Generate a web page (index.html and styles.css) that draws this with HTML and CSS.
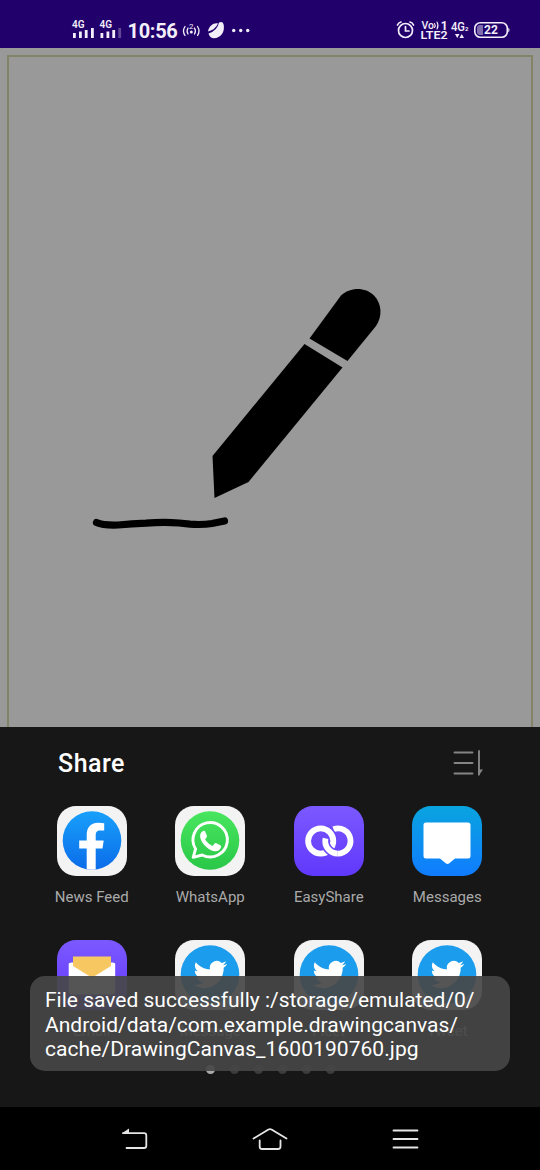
FILE: index.html
```
<!DOCTYPE html>
<html lang="en">
<head>
<meta charset="utf-8">
<title>Drawing Canvas</title>
<link rel="stylesheet" href="styles.css">
</head>
<body>
<svg class="defs" width="0" height="0" aria-hidden="true">
  <defs>
    <linearGradient id="fb" x1="0" y1="0" x2="0" y2="1"><stop offset="0" stop-color="#18a0fb"/><stop offset="1" stop-color="#0b6ce9"/></linearGradient>
    <linearGradient id="wa" x1="0" y1="0" x2="0" y2="1"><stop offset="0" stop-color="#48e65f"/><stop offset="1" stop-color="#2ac748"/></linearGradient>
    <symbol id="tweet" viewBox="0 0 70 70">
      <circle cx="35" cy="34.500" r="29.300" fill="#1c9cec"/>
      <path transform="translate(18.500 17.700) scale(1.400)" fill="#fff" d="M23.953 4.57a10 10 0 01-2.825.775 4.958 4.958 0 002.163-2.723c-.951.555-2.005.959-3.127 1.184a4.92 4.92 0 00-8.384 4.482C7.69 8.095 4.067 6.13 1.64 3.162a4.822 4.822 0 00-.666 2.475c0 1.71.87 3.213 2.188 4.096a4.904 4.904 0 01-2.228-.616v.06a4.923 4.923 0 003.946 4.827 4.996 4.996 0 01-2.212.085 4.936 4.936 0 004.604 3.417 9.867 9.867 0 01-6.102 2.105c-.39 0-.779-.023-1.17-.067a13.995 13.995 0 007.557 2.209c9.053 0 13.998-7.496 13.998-13.985 0-.21 0-.42-.015-.63A9.935 9.935 0 0024 4.59z"/>
    </symbol>
  </defs>
</svg>
<div class="screen">
  <header class="status">
    <svg class="status-left" viewBox="70 16 56 26" fill="#f3effa">
      <text x="72" y="27.600" class="tiny">4G</text>
      <text x="99.500" y="27.600" class="tiny">4G</text>
      <path d="M73 33h2.800v5H73zM79 31.500h2.800v6.500H79zM84.800 30h2.800v8h-2.800zM91 28h2.800v10H91zM100.500 33h2.800v5h-2.800zM106.500 31.500h2.800v6.500h-2.800zM112.300 30h2.800v8h-2.800z"/>
      <path opacity=".3" d="M118.300 28h2.800v10h-2.800z"/>
    </svg>
    <span class="clock">10:56</span>
    <svg class="status-icons" viewBox="180 16 72 28" fill="#f3effa">
      <g fill="none" stroke="#f3effa" stroke-width="1.300" stroke-linecap="round">
        <path d="M185 26.500q-3 4.500 0 9M188 28q-1.800 3 0 6M197.500 26.500q3 4.500 0 9M194.500 28q1.800 3 0 6"/>
      </g>
      <text x="189" y="28.500" font-size="8">2</text><circle cx="191.300" cy="32" r="1.500"/>
      <path d="M208 31.500C209 25.500 214 22.500 218 23.500Q215.500 29.500 208 31.500z"/>
      <path d="M208.500 33.500Q217.500 30.500 219 22.500Q222.500 21 223.500 24C225.500 32 220.500 38.500 213.500 38.200Q209.500 37.500 208.500 33.500z"/>
      <circle cx="233.700" cy="30.500" r="1.700"/><circle cx="240.700" cy="30.500" r="1.700"/><circle cx="247.700" cy="30.500" r="1.700"/>
    </svg>
    <svg class="status-right" viewBox="394 16 120 28" fill="#f3effa">
      <g fill="none" stroke="#f3effa" stroke-width="1.700" stroke-linecap="round">
        <circle cx="405.500" cy="30.500" r="7"/><path d="M405.500 26.500v4.500h3.500M397.500 25q1-2.500 3.500-3M413.500 25q-1-2.500-3.500-3"/>
        <path stroke-width="1.100" d="M434.500 23.500q1.500 2 0 4M437 22q2 3.500 0 7"/>
      </g>
      <text x="421.500" y="29" font-size="10.500" font-weight="500">Vo</text><text x="440.800" y="30" font-size="12" font-weight="700">1</text>
      <text x="420.500" y="39" font-size="11.500" font-weight="600" textLength="27" lengthAdjust="spacingAndGlyphs">LTE2</text>
      <text x="451" y="31" font-size="12.500" font-weight="500" textLength="14" lengthAdjust="spacingAndGlyphs">4G</text><text x="465" y="31" font-size="6" font-weight="700">2</text>
      <path d="M455 34h4.500l-2.250 4zM459.500 38h4.500l-2.250-4z"/>
      <rect x="474.800" y="22.700" width="32.500" height="14.600" rx="5.500" fill="none" stroke="#f3effa" stroke-width="1.600"/>
      <path d="M508.300 27.500q2.500 2.500 0 5z"/><path opacity=".45" d="M483 25h-3q-3 0-3 3v4q0 3 3 3h3z"/>
      <text x="484" y="34.300" font-size="12" font-weight="700">22</text>
    </svg>
  </header>

  <main class="canvas">
    <svg class="drawing" viewBox="9 57 522 670">
      <path d="M341 295.500C350 287 365 286.500 374 295.500C382 304 382.500 316 376 326L347.500 361L309.500 338.500Z"/>
      <path d="M304.500 344L342.500 367.500L248.500 482L214.500 498L212.500 456Z"/>
      <path d="M96.500 522.500Q103 525.500 118 525Q132 523.800 146 523.200Q163 521.700 179 523L190 524.200Q203 525 212 523.500L224.500 521" fill="none" stroke="#000" stroke-width="7.200" stroke-linecap="round"/>
    </svg>
  </main>

  <section class="sheet">
    <div class="sheet-head">
      <h1>Share</h1>
      <svg class="sort" viewBox="0 0 30 28" fill="none" stroke="#858585" stroke-width="1.900" stroke-linecap="round"><path d="M1.500 3.500h18M1.500 14h18M1.500 24.500h18M26 2v23.500"/><path d="M25.500 27V20.500H30z" fill="#858585" stroke="none"/></svg>
    </div>
    <div class="apps">
      <div class="app"><div class="tile light"><svg viewBox="0 0 70 70"><clipPath id="fbc"><circle cx="35" cy="34.500" r="29.300"/></clipPath><circle cx="35" cy="34.500" r="29.300" fill="url(#fb)"/><path clip-path="url(#fbc)" fill="#fff" d="M29.700 65V42.500h-7.500v-8h7.500V29C29.700 20.500 34.500 16.700 41 16.700Q45 16.700 47.200 17.300V24.500H43.500C39.500 24.500 38.700 26.500 38.700 29.500v5h8l-1.200 8h-6.800V65z"/></svg></div><span>News Feed</span></div>
      <div class="app"><div class="tile light"><svg viewBox="0 0 70 70"><circle cx="35" cy="34.500" r="29.300" fill="url(#wa)"/><path d="M18.200 51.300L20.600 42.900A17.200 17.200 0 1 1 27.200 49Z" fill="none" stroke="#fff" stroke-width="2.900" stroke-linejoin="round"/><path fill="#fff" d="M28 25q1.500-.8 2.300.8l1.600 4q.3 1-.5 1.900l-1.300 1.500q2.700 4.800 7.500 6.700l2-2.400q.8-.8 1.800-.3l4 2q1 .6.700 1.800c-.8 3.200-3.600 4.600-6.700 4.200C32 44 24 35 25.200 28.500q.6-2.500 2.800-3.500z"/></svg></div><span>WhatsApp</span></div>
      <div class="app"><div class="tile violet"><svg viewBox="0 0 70 70" fill="none" stroke="#fff" stroke-width="5.800"><path d="M39.500 23.200A12.600 12.600 0 1 1 43.800 47.600"/><path d="M31 23.200A12.600 12.600 0 0 1 39.300 35" stroke="#6c48fc" stroke-width="9"/><circle cx="26.700" cy="35" r="12.600"/><path d="M31.500 32.400A12.600 12.600 0 0 0 42 47.500" stroke="#6c48fc" stroke-width="9"/><path d="M31.500 32.400A12.600 12.600 0 0 0 43.800 47.600"/></svg></div><span>EasyShare</span></div>
      <div class="app"><div class="tile azure"><svg viewBox="0 0 70 70"><path fill="#fff" d="M14 16.500h42q2.500 0 2.500 2.500v31q0 2.500-2.500 2.500H43L37.300 57.300Q35.500 58.500 33.700 57.300L28 52.500H14q-2.500 0-2.500-2.500V19q0-2.500 2.500-2.500z"/></svg></div><span>Messages</span></div>
      <div class="app"><div class="tile violet"><svg viewBox="0 0 70 70"><path fill="#fff" d="M11.700 22.500h46.500v29q0 3-3 3H14.700q-3 0-3-3z"/><path fill="#f7c862" d="M16 16.500h38V26L37 36.500q-2 1-4 0L16 26z"/><path fill="#7055f8" d="M11 21.500l5-2v1.500l-5 3zM59 21.500l-5-2v1.500l5 3z"/></svg></div><span>Email</span></div>
      <div class="app"><div class="tile light"><svg><use href="#tweet"/></svg></div><span>Message</span></div>
      <div class="app"><div class="tile light"><svg><use href="#tweet"/></svg></div><span>Fleet</span></div>
      <div class="app"><div class="tile light"><svg><use href="#tweet"/></svg></div><span>Tweet</span></div>
    </div>
    <div class="dots"><i class="on"></i><i></i><i></i><i></i><i></i><i></i></div>
  </section>

  <nav class="nav">
    <svg viewBox="0 0 30 24"><path d="M2 8.200L9 3.500V8.200z" fill="#e5e5e5" stroke="none"/><path d="M3 8.200H24Q26.300 8.200 26.300 10.500V21Q26.300 23 24 23H6.500"/></svg>
    <svg class="home" viewBox="0 0 36 24"><path d="M1.500 13.500L16.500 4.500Q18 3.700 19.500 4.500L34.500 13.500M7.700 15.500V21.500Q7.700 24 10 24H26Q28.500 24 28.500 21.500V15.500"/></svg>
    <svg viewBox="0 0 30 24"><path d="M3.500 5.500h24M3.500 14h24M3.500 22.500h24"/></svg>
  </nav>
  <div class="toast">File saved successfully :/storage/emulated/0/<br>Android/data/com.example.drawingcanvas/<br><span class="file">cache/DrawingCanvas_1600190760.jpg</span></div>
</div>
</body>
</html>
```
FILE: styles.css
```
* { box-sizing: border-box; }
body { margin: 0; background: #000; font-family: Roboto, sans-serif; }
svg { display: block; overflow: visible; }
.defs { position: absolute; }
.screen { position: relative; width: 540px; height: 1170px; display: flex; flex-direction: column; overflow: hidden; }

.status { height: 48px; flex: none; background: #22006c; color: #f3effa; display: flex; padding: 16px 26px 0 70px; }
.status-left { width: 56px; height: 26px; }
.status-icons { width: 72px; height: 28px; }
.status-right { width: 120px; height: 28px; margin-left: auto; }
.tiny { font-size: 10px; font-weight: 600; }
.clock { width: 54px; padding-left: 1.5px; font-size: 20px; line-height: 30px; font-weight: 700; letter-spacing: -.3px; white-space: nowrap; }

.canvas { height: 679px; flex: none; background: #999; padding: 7px 7px 0; }
.drawing { width: 526px; height: 672px; border: 2px solid #838466; border-bottom: 0; }

.sheet { height: 380px; flex: none; background: #171717; }
.sheet-head { height: 78.5px; display: flex; justify-content: space-between; padding: 22px 57px 0 58px; }
.sheet-head h1 { margin: 0; color: #fff; font-size: 25px; line-height: 29px; font-weight: 500; letter-spacing: .5px; }
.sort { width: 30px; height: 28px; }
.apps { display: grid; grid-template-columns: repeat(4, 118.5px); grid-auto-rows: 134px; padding-left: 32.5px; }
.app { display: flex; flex-direction: column; align-items: center; color: #aaa; font-size: 15px; line-height: 18px; gap: 12px; }
.tile { width: 70px; height: 70px; border-radius: 19px; }
.tile svg { width: 70px; height: 70px; }
.light { background: #f3f3f3; }
.violet { background: linear-gradient(#7b59ff, #6038fc); }
.azure { background: linear-gradient(#09a4df, #107cff); }
.dots { display: flex; justify-content: center; gap: 15px; margin-top: -8.5px; }
.dots i { width: 9px; height: 9px; border-radius: 50%; background: #3c3c3c; }
.dots .on { background: #aaa; }

.nav { height: 63px; flex: none; background: #000; display: flex; justify-content: space-between; padding: 17.5px 120px 0; }
.nav svg { width: 30px; height: 24px; fill: none; stroke: #e5e5e5; stroke-width: 1.8; stroke-linecap: round; stroke-linejoin: round; }
.nav .home { width: 36px; }

.toast { position: absolute; left: 30px; top: 976px; width: 480px; height: 95px; border-radius: 15px; padding: 12px 15px; background: rgba(71, 71, 71, .92); color: #fff; font-size: 21px; line-height: 24.5px; white-space: nowrap; }
.file { letter-spacing: .06px; }
```
